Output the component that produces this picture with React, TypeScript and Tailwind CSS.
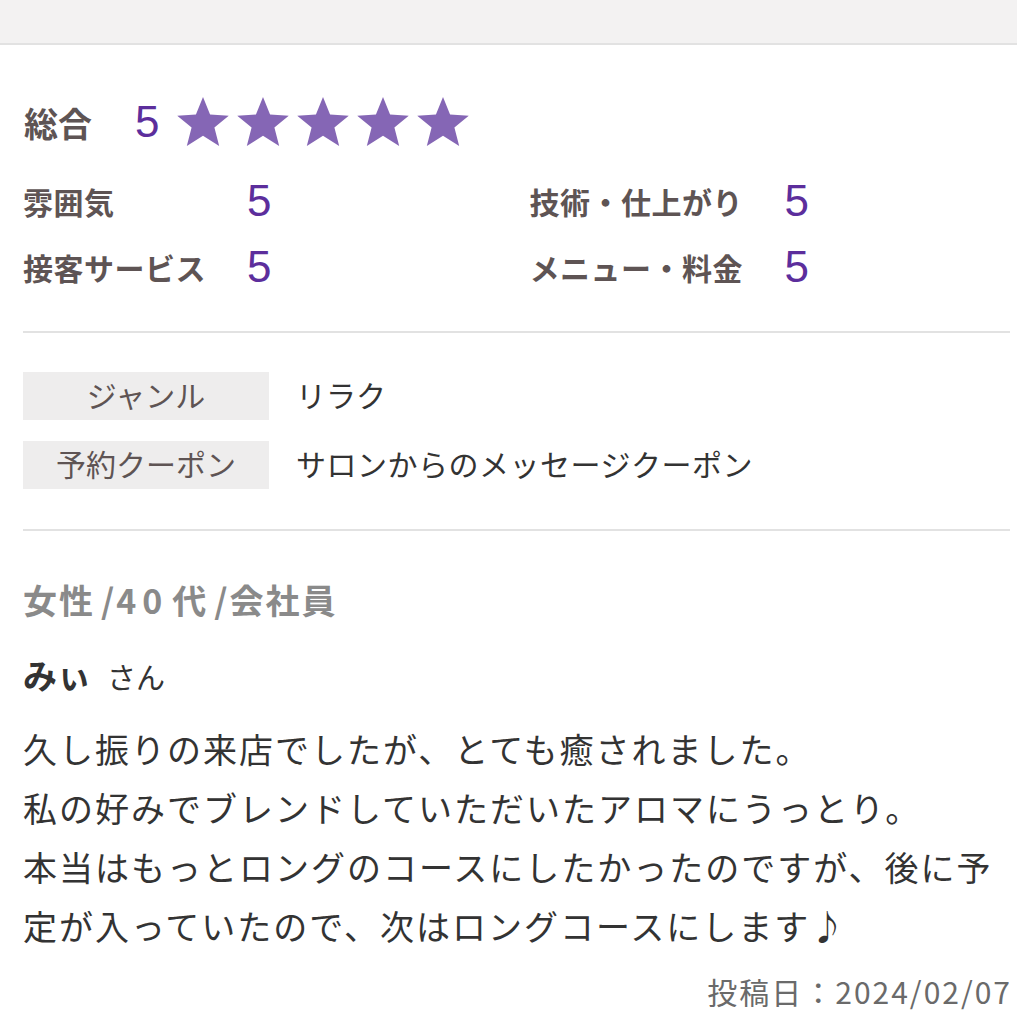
const purple = "text-[#5c2e9c]";
const num = { fontFamily: "'Liberation Sans', Arial, sans-serif" };

const Star = () => (
  <svg viewBox="0.7 1.2 22.6 21.5" className="w-[52px] h-[49px]">
    <path
      d="M12 1.2l3.1 7.7 8.2.5-6.3 5.2 2.1 8.1L12 18.2l-7.1 4.5 2.1-8.1L.7 9.4l8.2-.5z"
      fill="#8566b5"
    />
  </svg>
);

type Sub = { label: string; value: number };

const SubScore = ({ label, value, w }: Sub & { w: string }) => (
  <div className="flex items-center h-[66px]">
    <span className={`${w} text-[30px] font-bold text-[#5e5454] tracking-[0.5px]`}>{label}</span>
    <span className={`text-[44px] leading-none ${purple}`} style={num}>
      {value}
    </span>
  </div>
);

const App = () => {
  return (
    <div
      className="w-[1017px] h-[1016px] bg-white overflow-hidden"
      style={{ fontFamily: "'Noto Sans CJK JP', 'Noto Sans', sans-serif" }}
    >
      <div className="h-[45px] bg-[#f3f2f2] border-b-2 border-[#e2e2e2]" />

      <div className="pl-[23px] pr-[7px]">
        {/* overall */}
        <div className="flex items-center h-[64px] mt-[45px]">
          <span className="text-[34px] font-bold text-[#5e5454] w-[112px] pl-[1px]">総合</span>
          <span className={`text-[44px] leading-none ${purple} w-[42px]`} style={num}>
            5
          </span>
          <div className="flex gap-[8px] -mt-[2px]">
            <Star />
            <Star />
            <Star />
            <Star />
            <Star />
          </div>
        </div>

        <div className="grid grid-cols-2 mt-[14px]">
          <div className="flex flex-col">
            <SubScore label="雰囲気" value={5} w="w-[224px]" />
            <SubScore label="接客サービス" value={5} w="w-[224px]" />
          </div>
          <div className="flex flex-col pl-[13px]">
            <SubScore label="技術・仕上がり" value={5} w="w-[255px]" />
            <SubScore label="メニュー・料金" value={5} w="w-[255px]" />
          </div>
        </div>

        <div className="border-t-2 border-[#e2e2e2] mt-[31px]" />

        {/* details */}
        <div className="flex flex-col gap-[21px] mt-[39px]">
          <div className="flex items-center">
            <div className="w-[246px] h-[48px] bg-[#eeeded] flex items-center justify-center text-[30px] text-[#5e5454] pb-[4px]">
              ジャンル
            </div>
            <span className="ml-[27px] text-[30px] text-[#333] -mt-[4px]">リラク</span>
          </div>
          <div className="flex items-center">
            <div className="w-[246px] h-[48px] bg-[#eeeded] flex items-center justify-center text-[30px] text-[#5e5454] pb-[4px]">
              予約クーポン
            </div>
            <span className="ml-[27px] text-[30px] text-[#333] tracking-[0.5px] -mt-[4px]">
              サロンからのメッセージクーポン
            </span>
          </div>
        </div>

        <div className="border-t-2 border-[#e2e2e2] mt-[40px]" />

        {/* reviewer */}
        <div className="mt-[47px] text-[34px] font-bold text-[#8a8a8a] leading-[44px] tracking-[2px]">
          女性<span className="ml-[6px]">/</span>
          <span className="tracking-[6px]">40</span>
          <span className="ml-[4px]">代</span>
          <span className="ml-[6px]">/</span>会社員
        </div>
        <div className="mt-[31px] flex items-baseline text-[#333] leading-[44px]">
          <span className="text-[34px] font-bold">みぃ</span>
          <span className="text-[29px] ml-[16px]">さん</span>
        </div>

        <p className="mt-[21px] text-[34px] leading-[59px] text-[#333] tracking-[2px]">
          久し振りの来店でしたが、とても癒されました。
          <br />
          私の好みでブレンドしていただいたアロマにうっとり。
          <br />
          本当はもっとロングのコースにしたかったのですが、後に予定が入っていたので、次はロングコースにします♪
        </p>

        <div className="mt-[16px] text-right text-[30px] leading-[40px] text-[#6a6a6a] tracking-[2px] -mr-[2px]">
          投稿日：2024/02/07
        </div>
      </div>
    </div>
  );
};

export default App;
